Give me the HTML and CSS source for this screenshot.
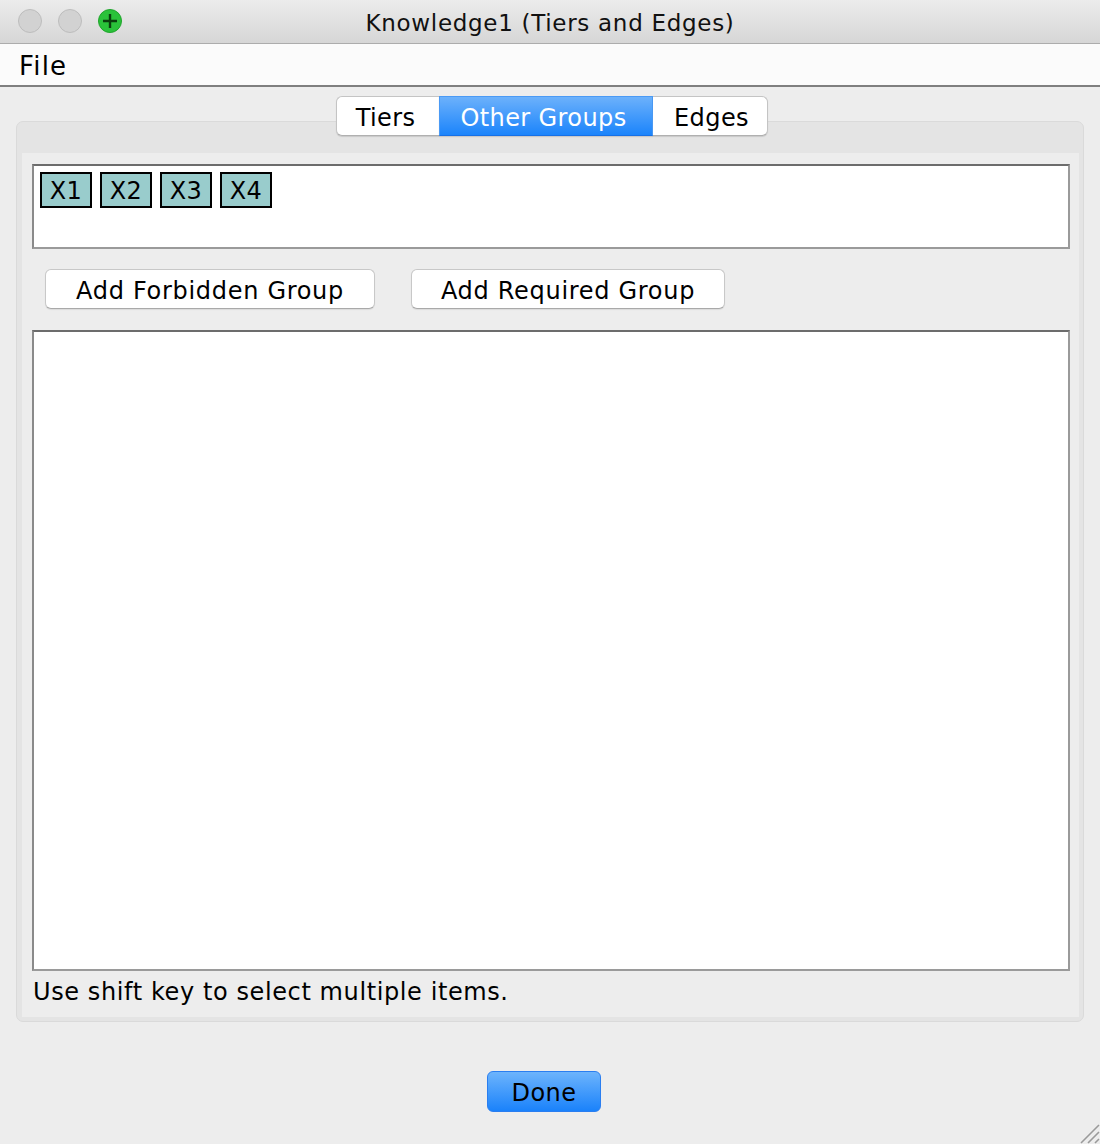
FILE: index.html
```html
<!DOCTYPE html>
<html>
<head>
<meta charset="utf-8">
<title>Knowledge1 (Tiers and Edges)</title>
<link rel="stylesheet" href="styles.css">
</head>
<body>
<div class="window">
  <div class="titlebar">
    <div class="lights">
      <span class="light"></span>
      <span class="light"></span>
      <span class="light green">
        <svg width="24" height="24" viewBox="0 0 24 24"><path d="M12 5v14M5 12h14" stroke="#0a3f0e" stroke-width="2.4" fill="none"/></svg>
      </span>
    </div>
    <div class="title">Knowledge1 (Tiers and Edges)</div>
  </div>
  <div class="menubar"><span class="menu">File</span></div>
  <div class="content">
    <div class="tabs">
      <div class="tab first">Tiers</div>
      <div class="tab selected">Other Groups</div>
      <div class="tab last">Edges</div>
    </div>
    <div class="panel">
      <div class="panel-inner">
        <div class="varbox">
          <span class="chip">X1</span>
          <span class="chip">X2</span>
          <span class="chip">X3</span>
          <span class="chip">X4</span>
        </div>
        <div class="buttons">
          <button class="btn forbidden">Add Forbidden Group</button>
          <button class="btn required">Add Required Group</button>
        </div>
        <div class="listbox"></div>
        <div class="hint">Use shift key to select multiple items.</div>
      </div>
    </div>
    <div class="footer">
      <button class="done">Done</button>
    </div>
  </div>
  <div class="grip">
    <svg width="22" height="22" viewBox="0 0 22 22"><path d="M21 3L3 21M21 10L10 21M21 17L17 21" stroke="#9a9a9a" stroke-width="1.6" fill="none"/></svg>
  </div>
</div>
</body>
</html>
```
FILE: styles.css
```css
* { box-sizing: border-box; }
html, body { margin: 0; padding: 0; }
body {
  background: #ededed;
  font-family: "DejaVu Sans", "Noto Sans", sans-serif;
  color: #000;
  width: 1100px;
  height: 1144px;
  overflow: hidden;
}
.window {
  position: relative;
  width: 1100px;
  height: 1144px;
}
.titlebar {
  height: 44px;
  background: linear-gradient(#ececec, #d6d6d6);
  border-bottom: 1px solid #acacac;
  display: flex;
  align-items: center;
  position: relative;
}
.lights {
  display: flex;
  gap: 16px;
  padding-left: 18px;
  position: absolute;
  left: 0;
  top: 9px;
}
.light {
  width: 24px;
  height: 24px;
  border-radius: 50%;
  background: #d2d2d2;
  border: 1px solid #bdbdbd;
  display: flex;
  align-items: center;
  justify-content: center;
}
.light.green {
  background: #2ac23a;
  border-color: #20a52c;
}
.light.green svg { margin: -1px; }
.title {
  flex: 1;
  text-align: center;
  font-size: 23px;
  letter-spacing: 0.7px;
  color: #111;
  padding-top: 2px;
}
.menubar {
  height: 43px;
  background: #fbfbfb;
  border-bottom: 2px solid #7f7f7f;
  display: flex;
  align-items: center;
  padding-left: 19px;
}
.menu {
  font-size: 26px;
  letter-spacing: 1.2px;
  padding-top: 2px;
}
.content {
  padding: 9px 16px 0;
}
.tabs {
  display: flex;
  justify-content: center;
  position: relative;
  z-index: 1;
  margin-bottom: -15px;
  margin-left: 3px;
}
.tab {
  height: 40px;
  background: #fff;
  border: 1px solid #c4c4c4;
  border-bottom-color: #b0b0b0;
  font-size: 24px;
  letter-spacing: 0.4px;
  display: flex;
  align-items: center;
  justify-content: center;
  padding-top: 3px;
  box-shadow: 0 1px 1px rgba(0,0,0,0.12);
}
.tab.first {
  width: 103px;
  border-radius: 6px 0 0 6px;
  border-right: none;
  padding-right: 4px;
}
.tab.selected {
  width: 214px;
  background: linear-gradient(#6cb1fb, #1b84fb);
  border-color: #4a9af5;
  border-bottom-color: #1670e6;
  color: #fff;
  padding-right: 4px;
}
.tab.last {
  width: 115px;
  border-radius: 0 6px 6px 0;
  border-left: none;
  padding-left: 4px;
}
.panel {
  background: #e4e4e4;
  border: 1px solid #dadada;
  border-radius: 7px;
  padding: 31px 4px 4px 5px;
  height: 901px;
}
.panel-inner {
  background: #ededed;
  height: 100%;
  padding: 11px 9px 0 10px;
}
.varbox {
  height: 85px;
  background: #fff;
  border-style: solid;
  border-width: 2px;
  border-color: #6c6c6c #9a9a9a #9a9a9a #8a8a8a;
  padding: 6px;
  display: flex;
  align-items: flex-start;
  gap: 8px;
}
.chip {
  width: 52px;
  height: 36px;
  background: #99cccc;
  border: 2px solid #000;
  font-size: 24px;
  letter-spacing: 0.4px;
  display: flex;
  align-items: center;
  justify-content: center;
  padding-top: 2px;
}
.buttons {
  display: flex;
  gap: 36px;
  padding: 20px 0 0 13px;
  height: 81px;
}
.btn {
  height: 40px;
  background: #fff;
  border: 1px solid #c8c8c8;
  border-bottom-color: #a9a9a9;
  border-radius: 6px;
  font-family: inherit;
  font-size: 24px;
  letter-spacing: 0.7px;
  color: #000;
  padding: 3px 0 0;
  box-shadow: 0 1px 1px rgba(0,0,0,0.08);
}
.btn.forbidden { width: 330px; }
.btn.required { width: 314px; }
.listbox {
  height: 641px;
  background: #fff;
  border-style: solid;
  border-width: 2px;
  border-color: #6c6c6c #9a9a9a #9a9a9a #8a8a8a;
}
.hint {
  font-size: 24px;
  letter-spacing: 0.6px;
  padding-left: 1px;
  padding-top: 5px;
  line-height: 32px;
}
.footer {
  display: flex;
  justify-content: center;
  padding-top: 49px;
  padding-right: 12px;
}
.done {
  width: 114px;
  height: 41px;
  border-radius: 6px;
  border: 1px solid #2a7ef0;
  background: linear-gradient(#6db4fc, #1a82fb);
  font-family: inherit;
  font-size: 24px;
  letter-spacing: 0.5px;
  color: #000;
  padding: 2px 0 0;
}
.grip {
  position: absolute;
  right: 0;
  bottom: 0;
  width: 22px;
  height: 22px;
}
.grip svg { display: block; }
```
